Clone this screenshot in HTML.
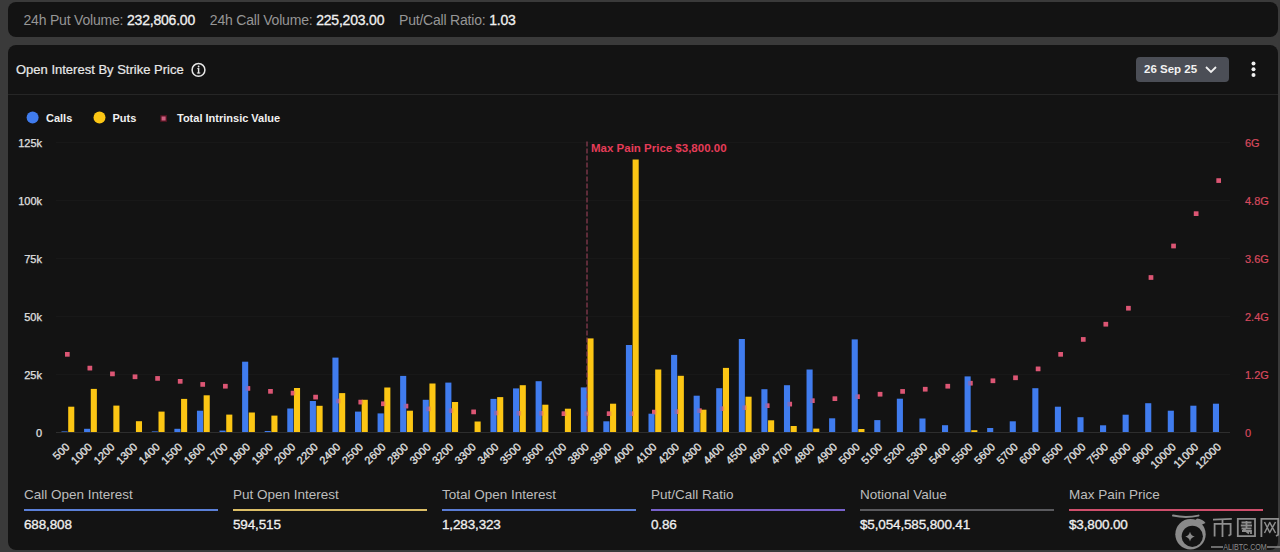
<!DOCTYPE html>
<html><head><meta charset="utf-8"><style>
*{box-sizing:border-box}
html,body{margin:0;padding:0}
body{width:1280px;height:552px;overflow:hidden;background:#3a3a3a;font-family:"Liberation Sans",sans-serif;position:relative}
.panel{position:absolute;background:#131313;border-radius:8px}
.t{position:absolute;white-space:nowrap;line-height:1}
.ax{font-size:11px;fill:#e0e0e0;stroke:#e0e0e0;stroke-width:0.25px}
.axr{font-size:11px;fill:#d84a5e;stroke:#d84a5e;stroke-width:0.2px}
.xl{font-size:11px;fill:#e2e2e2;stroke:#e2e2e2;stroke-width:0.3px}
.mp{font-size:11.5px;font-weight:bold;fill:#e63c58}
.lab{color:#969696}
.val{color:#f0f0f0;-webkit-text-stroke:0.3px #f0f0f0}
.st{position:absolute;top:0;width:194px}
.st .l{position:absolute;left:0;top:487px;font-size:13.5px;color:#bdbdbd;white-space:nowrap}
.st .ln{position:absolute;left:0;top:509px;width:194px;height:2px}
.st .v{position:absolute;left:0;top:517px;font-size:13.5px;color:#f0f0f0;white-space:nowrap;letter-spacing:-0.15px;-webkit-text-stroke:0.3px #f0f0f0}
</style></head><body>
<div class="panel" style="left:8px;top:2px;width:1270px;height:35px"></div>
<div class="t" style="left:23.5px;top:13px;font-size:14px;letter-spacing:-0.2px"><span class="lab">24h Put Volume:</span> <span class="val">232,806.00</span>&nbsp;&nbsp;&nbsp; <span class="lab">24h Call Volume:</span> <span class="val">225,203.00</span>&nbsp;&nbsp;&nbsp; <span class="lab">Put/Call Ratio:</span> <span class="val">1.03</span></div>
<div class="panel" style="left:8px;top:45px;width:1270px;height:505px"></div>
<div style="position:absolute;left:8px;top:94px;width:1270px;height:1px;background:#262626"></div>
<div class="t" style="left:16px;top:63px;font-size:13px;color:#e8e8e8;-webkit-text-stroke:0.2px #e8e8e8">Open Interest By Strike Price</div>
<svg style="position:absolute;left:0;top:0" width="1280" height="552">
<circle cx="198.5" cy="69.9" r="6.4" fill="none" stroke="#e6e6e6" stroke-width="1.5"/>
<rect x="197.9" y="68.3" width="1.4" height="5" fill="#e6e6e6"/>
<rect x="196.9" y="72.5" width="3.4" height="1" fill="#e6e6e6"/>
<rect x="197.2" y="68.2" width="2" height="0.9" fill="#e6e6e6"/>
<circle cx="198.6" cy="66.5" r="0.9" fill="#e6e6e6"/>
<rect x="1136" y="57" width="93" height="25" rx="4" fill="#4b4e56"/>
<polyline points="1206,67 1211,72 1216,67" fill="none" stroke="#f0f0f0" stroke-width="1.8"/>
<circle cx="1253.5" cy="63.5" r="2" fill="#f0f0f0"/>
<circle cx="1253.5" cy="69.3" r="2" fill="#f0f0f0"/>
<circle cx="1253.5" cy="75.1" r="2" fill="#f0f0f0"/>
<circle cx="32.6" cy="117.6" r="6" fill="#407cee"/>
<circle cx="99.5" cy="117.6" r="6" fill="#fcc614"/>
<rect x="160.3" y="115.2" width="6.6" height="6.6" fill="#5a1624"/><rect x="161.6" y="116.5" width="4" height="4" fill="#cc5f80"/>
<line x1="56.0" y1="432.5" x2="1230.0" y2="432.5" stroke="#2e2e2e" stroke-width="1"/>
<line x1="56.0" y1="374.5" x2="1230.0" y2="374.5" stroke="#181818" stroke-width="1"/>
<line x1="56.0" y1="316.5" x2="1230.0" y2="316.5" stroke="#181818" stroke-width="1"/>
<line x1="56.0" y1="258.5" x2="1230.0" y2="258.5" stroke="#181818" stroke-width="1"/>
<line x1="56.0" y1="200.5" x2="1230.0" y2="200.5" stroke="#181818" stroke-width="1"/>
<line x1="56.0" y1="142.5" x2="1230.0" y2="142.5" stroke="#181818" stroke-width="1"/>
<text x="42" y="436.8" text-anchor="end" class="ax">0</text>
<text x="42" y="378.8" text-anchor="end" class="ax">25k</text>
<text x="42" y="320.8" text-anchor="end" class="ax">50k</text>
<text x="42" y="262.8" text-anchor="end" class="ax">75k</text>
<text x="42" y="204.8" text-anchor="end" class="ax">100k</text>
<text x="42" y="146.8" text-anchor="end" class="ax">125k</text>
<text x="1245" y="437.0" class="axr">0</text>
<text x="1245" y="379.0" class="axr">1.2G</text>
<text x="1245" y="321.0" class="axr">2.4G</text>
<text x="1245" y="263.0" class="axr">3.6G</text>
<text x="1245" y="205.0" class="axr">4.8G</text>
<text x="1245" y="147.0" class="axr">6G</text>
<text transform="translate(70.29,447.6) rotate(-45)" text-anchor="end" class="xl">500</text>
<text transform="translate(92.87,447.6) rotate(-45)" text-anchor="end" class="xl">1000</text>
<text transform="translate(115.44,447.6) rotate(-45)" text-anchor="end" class="xl">1200</text>
<text transform="translate(138.02,447.6) rotate(-45)" text-anchor="end" class="xl">1300</text>
<text transform="translate(160.60,447.6) rotate(-45)" text-anchor="end" class="xl">1400</text>
<text transform="translate(183.17,447.6) rotate(-45)" text-anchor="end" class="xl">1500</text>
<text transform="translate(205.75,447.6) rotate(-45)" text-anchor="end" class="xl">1600</text>
<text transform="translate(228.33,447.6) rotate(-45)" text-anchor="end" class="xl">1700</text>
<text transform="translate(250.90,447.6) rotate(-45)" text-anchor="end" class="xl">1800</text>
<text transform="translate(273.48,447.6) rotate(-45)" text-anchor="end" class="xl">1900</text>
<text transform="translate(296.06,447.6) rotate(-45)" text-anchor="end" class="xl">2000</text>
<text transform="translate(318.63,447.6) rotate(-45)" text-anchor="end" class="xl">2200</text>
<text transform="translate(341.21,447.6) rotate(-45)" text-anchor="end" class="xl">2400</text>
<text transform="translate(363.79,447.6) rotate(-45)" text-anchor="end" class="xl">2500</text>
<text transform="translate(386.37,447.6) rotate(-45)" text-anchor="end" class="xl">2600</text>
<text transform="translate(408.94,447.6) rotate(-45)" text-anchor="end" class="xl">2800</text>
<text transform="translate(431.52,447.6) rotate(-45)" text-anchor="end" class="xl">3000</text>
<text transform="translate(454.10,447.6) rotate(-45)" text-anchor="end" class="xl">3200</text>
<text transform="translate(476.67,447.6) rotate(-45)" text-anchor="end" class="xl">3300</text>
<text transform="translate(499.25,447.6) rotate(-45)" text-anchor="end" class="xl">3400</text>
<text transform="translate(521.83,447.6) rotate(-45)" text-anchor="end" class="xl">3500</text>
<text transform="translate(544.40,447.6) rotate(-45)" text-anchor="end" class="xl">3600</text>
<text transform="translate(566.98,447.6) rotate(-45)" text-anchor="end" class="xl">3700</text>
<text transform="translate(589.56,447.6) rotate(-45)" text-anchor="end" class="xl">3800</text>
<text transform="translate(612.13,447.6) rotate(-45)" text-anchor="end" class="xl">3900</text>
<text transform="translate(634.71,447.6) rotate(-45)" text-anchor="end" class="xl">4000</text>
<text transform="translate(657.29,447.6) rotate(-45)" text-anchor="end" class="xl">4100</text>
<text transform="translate(679.87,447.6) rotate(-45)" text-anchor="end" class="xl">4200</text>
<text transform="translate(702.44,447.6) rotate(-45)" text-anchor="end" class="xl">4300</text>
<text transform="translate(725.02,447.6) rotate(-45)" text-anchor="end" class="xl">4400</text>
<text transform="translate(747.60,447.6) rotate(-45)" text-anchor="end" class="xl">4500</text>
<text transform="translate(770.17,447.6) rotate(-45)" text-anchor="end" class="xl">4600</text>
<text transform="translate(792.75,447.6) rotate(-45)" text-anchor="end" class="xl">4700</text>
<text transform="translate(815.33,447.6) rotate(-45)" text-anchor="end" class="xl">4800</text>
<text transform="translate(837.90,447.6) rotate(-45)" text-anchor="end" class="xl">4900</text>
<text transform="translate(860.48,447.6) rotate(-45)" text-anchor="end" class="xl">5000</text>
<text transform="translate(883.06,447.6) rotate(-45)" text-anchor="end" class="xl">5100</text>
<text transform="translate(905.63,447.6) rotate(-45)" text-anchor="end" class="xl">5200</text>
<text transform="translate(928.21,447.6) rotate(-45)" text-anchor="end" class="xl">5300</text>
<text transform="translate(950.79,447.6) rotate(-45)" text-anchor="end" class="xl">5400</text>
<text transform="translate(973.37,447.6) rotate(-45)" text-anchor="end" class="xl">5500</text>
<text transform="translate(995.94,447.6) rotate(-45)" text-anchor="end" class="xl">5600</text>
<text transform="translate(1018.52,447.6) rotate(-45)" text-anchor="end" class="xl">5700</text>
<text transform="translate(1041.10,447.6) rotate(-45)" text-anchor="end" class="xl">6000</text>
<text transform="translate(1063.67,447.6) rotate(-45)" text-anchor="end" class="xl">6500</text>
<text transform="translate(1086.25,447.6) rotate(-45)" text-anchor="end" class="xl">7000</text>
<text transform="translate(1108.83,447.6) rotate(-45)" text-anchor="end" class="xl">7500</text>
<text transform="translate(1131.40,447.6) rotate(-45)" text-anchor="end" class="xl">8000</text>
<text transform="translate(1153.98,447.6) rotate(-45)" text-anchor="end" class="xl">9000</text>
<text transform="translate(1176.56,447.6) rotate(-45)" text-anchor="end" class="xl">10000</text>
<text transform="translate(1199.13,447.6) rotate(-45)" text-anchor="end" class="xl">11000</text>
<text transform="translate(1221.71,447.6) rotate(-45)" text-anchor="end" class="xl">12000</text>
<rect x="64.99" y="352.00" width="4.6" height="4.6" fill="#dc5674"/>
<rect x="87.57" y="365.80" width="4.6" height="4.6" fill="#dc5674"/>
<rect x="110.14" y="371.60" width="4.6" height="4.6" fill="#dc5674"/>
<rect x="132.72" y="374.50" width="4.6" height="4.6" fill="#dc5674"/>
<rect x="155.30" y="376.10" width="4.6" height="4.6" fill="#dc5674"/>
<rect x="177.87" y="379.00" width="4.6" height="4.6" fill="#dc5674"/>
<rect x="200.45" y="382.10" width="4.6" height="4.6" fill="#dc5674"/>
<rect x="223.03" y="383.90" width="4.6" height="4.6" fill="#dc5674"/>
<rect x="245.60" y="386.10" width="4.6" height="4.6" fill="#dc5674"/>
<rect x="268.18" y="389.00" width="4.6" height="4.6" fill="#dc5674"/>
<rect x="290.76" y="390.80" width="4.6" height="4.6" fill="#dc5674"/>
<rect x="313.33" y="394.80" width="4.6" height="4.6" fill="#dc5674"/>
<rect x="335.91" y="398.70" width="4.6" height="4.6" fill="#dc5674"/>
<rect x="358.49" y="399.80" width="4.6" height="4.6" fill="#dc5674"/>
<rect x="381.07" y="401.50" width="4.6" height="4.6" fill="#dc5674"/>
<rect x="403.64" y="403.80" width="4.6" height="4.6" fill="#dc5674"/>
<rect x="426.22" y="406.60" width="4.6" height="4.6" fill="#dc5674"/>
<rect x="448.80" y="408.40" width="4.6" height="4.6" fill="#dc5674"/>
<rect x="471.37" y="409.60" width="4.6" height="4.6" fill="#dc5674"/>
<rect x="493.95" y="410.70" width="4.6" height="4.6" fill="#dc5674"/>
<rect x="516.53" y="411.00" width="4.6" height="4.6" fill="#dc5674"/>
<rect x="539.10" y="411.00" width="4.6" height="4.6" fill="#dc5674"/>
<rect x="561.68" y="411.40" width="4.6" height="4.6" fill="#dc5674"/>
<rect x="584.26" y="411.40" width="4.6" height="4.6" fill="#dc5674"/>
<rect x="606.83" y="411.40" width="4.6" height="4.6" fill="#dc5674"/>
<rect x="629.41" y="411.40" width="4.6" height="4.6" fill="#dc5674"/>
<rect x="651.99" y="409.80" width="4.6" height="4.6" fill="#dc5674"/>
<rect x="674.57" y="409.40" width="4.6" height="4.6" fill="#dc5674"/>
<rect x="697.14" y="408.40" width="4.6" height="4.6" fill="#dc5674"/>
<rect x="719.72" y="406.40" width="4.6" height="4.6" fill="#dc5674"/>
<rect x="742.30" y="405.40" width="4.6" height="4.6" fill="#dc5674"/>
<rect x="764.87" y="403.40" width="4.6" height="4.6" fill="#dc5674"/>
<rect x="787.45" y="401.80" width="4.6" height="4.6" fill="#dc5674"/>
<rect x="810.03" y="398.40" width="4.6" height="4.6" fill="#dc5674"/>
<rect x="832.60" y="396.40" width="4.6" height="4.6" fill="#dc5674"/>
<rect x="855.18" y="394.40" width="4.6" height="4.6" fill="#dc5674"/>
<rect x="877.76" y="391.90" width="4.6" height="4.6" fill="#dc5674"/>
<rect x="900.33" y="389.10" width="4.6" height="4.6" fill="#dc5674"/>
<rect x="922.91" y="386.90" width="4.6" height="4.6" fill="#dc5674"/>
<rect x="945.49" y="383.90" width="4.6" height="4.6" fill="#dc5674"/>
<rect x="968.07" y="380.90" width="4.6" height="4.6" fill="#dc5674"/>
<rect x="990.64" y="378.50" width="4.6" height="4.6" fill="#dc5674"/>
<rect x="1013.22" y="375.50" width="4.6" height="4.6" fill="#dc5674"/>
<rect x="1035.80" y="366.60" width="4.6" height="4.6" fill="#dc5674"/>
<rect x="1058.37" y="352.00" width="4.6" height="4.6" fill="#dc5674"/>
<rect x="1080.95" y="337.10" width="4.6" height="4.6" fill="#dc5674"/>
<rect x="1103.53" y="321.90" width="4.6" height="4.6" fill="#dc5674"/>
<rect x="1126.10" y="305.90" width="4.6" height="4.6" fill="#dc5674"/>
<rect x="1148.68" y="275.20" width="4.6" height="4.6" fill="#dc5674"/>
<rect x="1171.26" y="243.70" width="4.6" height="4.6" fill="#dc5674"/>
<rect x="1193.83" y="211.40" width="4.6" height="4.6" fill="#dc5674"/>
<rect x="1216.41" y="178.30" width="4.6" height="4.6" fill="#dc5674"/>
<rect x="61.49" y="431.40" width="6.1" height="0.60" fill="#407cee"/>
<rect x="68.19" y="406.70" width="6.1" height="25.30" fill="#fcc614"/>
<rect x="84.07" y="428.80" width="6.1" height="3.20" fill="#407cee"/>
<rect x="90.77" y="388.90" width="6.1" height="43.10" fill="#fcc614"/>
<rect x="113.34" y="405.60" width="6.1" height="26.40" fill="#fcc614"/>
<rect x="135.92" y="421.20" width="6.1" height="10.80" fill="#fcc614"/>
<rect x="151.80" y="431.40" width="6.1" height="0.60" fill="#407cee"/>
<rect x="158.50" y="411.60" width="6.1" height="20.40" fill="#fcc614"/>
<rect x="174.37" y="428.80" width="6.1" height="3.20" fill="#407cee"/>
<rect x="181.07" y="398.90" width="6.1" height="33.10" fill="#fcc614"/>
<rect x="196.95" y="410.70" width="6.1" height="21.30" fill="#407cee"/>
<rect x="203.65" y="395.30" width="6.1" height="36.70" fill="#fcc614"/>
<rect x="219.53" y="430.60" width="6.1" height="1.40" fill="#407cee"/>
<rect x="226.23" y="414.60" width="6.1" height="17.40" fill="#fcc614"/>
<rect x="242.10" y="361.70" width="6.1" height="70.30" fill="#407cee"/>
<rect x="248.80" y="412.50" width="6.1" height="19.50" fill="#fcc614"/>
<rect x="264.68" y="431.00" width="6.1" height="1.00" fill="#407cee"/>
<rect x="271.38" y="415.60" width="6.1" height="16.40" fill="#fcc614"/>
<rect x="287.26" y="408.50" width="6.1" height="23.50" fill="#407cee"/>
<rect x="293.96" y="388.00" width="6.1" height="44.00" fill="#fcc614"/>
<rect x="309.83" y="401.00" width="6.1" height="31.00" fill="#407cee"/>
<rect x="316.53" y="405.80" width="6.1" height="26.20" fill="#fcc614"/>
<rect x="332.41" y="357.60" width="6.1" height="74.40" fill="#407cee"/>
<rect x="339.11" y="393.10" width="6.1" height="38.90" fill="#fcc614"/>
<rect x="354.99" y="411.60" width="6.1" height="20.40" fill="#407cee"/>
<rect x="361.69" y="399.80" width="6.1" height="32.20" fill="#fcc614"/>
<rect x="377.57" y="413.40" width="6.1" height="18.60" fill="#407cee"/>
<rect x="384.27" y="387.50" width="6.1" height="44.50" fill="#fcc614"/>
<rect x="400.14" y="375.90" width="6.1" height="56.10" fill="#407cee"/>
<rect x="406.84" y="410.70" width="6.1" height="21.30" fill="#fcc614"/>
<rect x="422.72" y="399.80" width="6.1" height="32.20" fill="#407cee"/>
<rect x="429.42" y="383.50" width="6.1" height="48.50" fill="#fcc614"/>
<rect x="445.30" y="382.60" width="6.1" height="49.40" fill="#407cee"/>
<rect x="452.00" y="402.00" width="6.1" height="30.00" fill="#fcc614"/>
<rect x="474.57" y="421.50" width="6.1" height="10.50" fill="#fcc614"/>
<rect x="490.45" y="398.90" width="6.1" height="33.10" fill="#407cee"/>
<rect x="497.15" y="397.10" width="6.1" height="34.90" fill="#fcc614"/>
<rect x="513.03" y="388.40" width="6.1" height="43.60" fill="#407cee"/>
<rect x="519.73" y="385.20" width="6.1" height="46.80" fill="#fcc614"/>
<rect x="535.60" y="381.20" width="6.1" height="50.80" fill="#407cee"/>
<rect x="542.30" y="404.70" width="6.1" height="27.30" fill="#fcc614"/>
<rect x="564.88" y="408.70" width="6.1" height="23.30" fill="#fcc614"/>
<rect x="580.76" y="387.40" width="6.1" height="44.60" fill="#407cee"/>
<rect x="587.46" y="338.40" width="6.1" height="93.60" fill="#fcc614"/>
<rect x="603.33" y="421.30" width="6.1" height="10.70" fill="#407cee"/>
<rect x="610.03" y="403.70" width="6.1" height="28.30" fill="#fcc614"/>
<rect x="625.91" y="345.00" width="6.1" height="87.00" fill="#407cee"/>
<rect x="632.61" y="159.50" width="6.1" height="272.50" fill="#fcc614"/>
<rect x="648.49" y="413.70" width="6.1" height="18.30" fill="#407cee"/>
<rect x="655.19" y="369.50" width="6.1" height="62.50" fill="#fcc614"/>
<rect x="671.07" y="354.90" width="6.1" height="77.10" fill="#407cee"/>
<rect x="677.77" y="375.80" width="6.1" height="56.20" fill="#fcc614"/>
<rect x="693.64" y="395.70" width="6.1" height="36.30" fill="#407cee"/>
<rect x="700.34" y="409.70" width="6.1" height="22.30" fill="#fcc614"/>
<rect x="716.22" y="388.20" width="6.1" height="43.80" fill="#407cee"/>
<rect x="722.92" y="367.90" width="6.1" height="64.10" fill="#fcc614"/>
<rect x="738.80" y="339.00" width="6.1" height="93.00" fill="#407cee"/>
<rect x="745.50" y="396.70" width="6.1" height="35.30" fill="#fcc614"/>
<rect x="761.37" y="389.20" width="6.1" height="42.80" fill="#407cee"/>
<rect x="768.07" y="420.30" width="6.1" height="11.70" fill="#fcc614"/>
<rect x="783.95" y="385.20" width="6.1" height="46.80" fill="#407cee"/>
<rect x="790.65" y="426.00" width="6.1" height="6.00" fill="#fcc614"/>
<rect x="806.53" y="369.50" width="6.1" height="62.50" fill="#407cee"/>
<rect x="813.23" y="428.60" width="6.1" height="3.40" fill="#fcc614"/>
<rect x="829.10" y="418.30" width="6.1" height="13.70" fill="#407cee"/>
<rect x="851.68" y="339.40" width="6.1" height="92.60" fill="#407cee"/>
<rect x="858.38" y="429.00" width="6.1" height="3.00" fill="#fcc614"/>
<rect x="874.26" y="420.10" width="6.1" height="11.90" fill="#407cee"/>
<rect x="896.83" y="398.70" width="6.1" height="33.30" fill="#407cee"/>
<rect x="919.41" y="418.50" width="6.1" height="13.50" fill="#407cee"/>
<rect x="941.99" y="425.20" width="6.1" height="6.80" fill="#407cee"/>
<rect x="964.57" y="376.40" width="6.1" height="55.60" fill="#407cee"/>
<rect x="971.27" y="430.20" width="6.1" height="1.80" fill="#fcc614"/>
<rect x="987.14" y="428.00" width="6.1" height="4.00" fill="#407cee"/>
<rect x="1009.72" y="421.30" width="6.1" height="10.70" fill="#407cee"/>
<rect x="1032.30" y="388.20" width="6.1" height="43.80" fill="#407cee"/>
<rect x="1054.87" y="406.70" width="6.1" height="25.30" fill="#407cee"/>
<rect x="1077.45" y="417.20" width="6.1" height="14.80" fill="#407cee"/>
<rect x="1100.03" y="425.30" width="6.1" height="6.70" fill="#407cee"/>
<rect x="1122.60" y="414.70" width="6.1" height="17.30" fill="#407cee"/>
<rect x="1145.18" y="403.20" width="6.1" height="28.80" fill="#407cee"/>
<rect x="1167.76" y="410.70" width="6.1" height="21.30" fill="#407cee"/>
<rect x="1190.33" y="405.70" width="6.1" height="26.30" fill="#407cee"/>
<rect x="1212.91" y="403.70" width="6.1" height="28.30" fill="#407cee"/>
<g opacity="0.35"><rect x="64.99" y="352.00" width="4.6" height="4.6" fill="#dc5674"/><rect x="87.57" y="365.80" width="4.6" height="4.6" fill="#dc5674"/><rect x="110.14" y="371.60" width="4.6" height="4.6" fill="#dc5674"/><rect x="132.72" y="374.50" width="4.6" height="4.6" fill="#dc5674"/><rect x="155.30" y="376.10" width="4.6" height="4.6" fill="#dc5674"/><rect x="177.87" y="379.00" width="4.6" height="4.6" fill="#dc5674"/><rect x="200.45" y="382.10" width="4.6" height="4.6" fill="#dc5674"/><rect x="223.03" y="383.90" width="4.6" height="4.6" fill="#dc5674"/><rect x="245.60" y="386.10" width="4.6" height="4.6" fill="#dc5674"/><rect x="268.18" y="389.00" width="4.6" height="4.6" fill="#dc5674"/><rect x="290.76" y="390.80" width="4.6" height="4.6" fill="#dc5674"/><rect x="313.33" y="394.80" width="4.6" height="4.6" fill="#dc5674"/><rect x="335.91" y="398.70" width="4.6" height="4.6" fill="#dc5674"/><rect x="358.49" y="399.80" width="4.6" height="4.6" fill="#dc5674"/><rect x="381.07" y="401.50" width="4.6" height="4.6" fill="#dc5674"/><rect x="403.64" y="403.80" width="4.6" height="4.6" fill="#dc5674"/><rect x="426.22" y="406.60" width="4.6" height="4.6" fill="#dc5674"/><rect x="448.80" y="408.40" width="4.6" height="4.6" fill="#dc5674"/><rect x="471.37" y="409.60" width="4.6" height="4.6" fill="#dc5674"/><rect x="493.95" y="410.70" width="4.6" height="4.6" fill="#dc5674"/><rect x="516.53" y="411.00" width="4.6" height="4.6" fill="#dc5674"/><rect x="539.10" y="411.00" width="4.6" height="4.6" fill="#dc5674"/><rect x="561.68" y="411.40" width="4.6" height="4.6" fill="#dc5674"/><rect x="584.26" y="411.40" width="4.6" height="4.6" fill="#dc5674"/><rect x="606.83" y="411.40" width="4.6" height="4.6" fill="#dc5674"/><rect x="629.41" y="411.40" width="4.6" height="4.6" fill="#dc5674"/><rect x="651.99" y="409.80" width="4.6" height="4.6" fill="#dc5674"/><rect x="674.57" y="409.40" width="4.6" height="4.6" fill="#dc5674"/><rect x="697.14" y="408.40" width="4.6" height="4.6" fill="#dc5674"/><rect x="719.72" y="406.40" width="4.6" height="4.6" fill="#dc5674"/><rect x="742.30" y="405.40" width="4.6" height="4.6" fill="#dc5674"/><rect x="764.87" y="403.40" width="4.6" height="4.6" fill="#dc5674"/><rect x="787.45" y="401.80" width="4.6" height="4.6" fill="#dc5674"/><rect x="810.03" y="398.40" width="4.6" height="4.6" fill="#dc5674"/><rect x="832.60" y="396.40" width="4.6" height="4.6" fill="#dc5674"/><rect x="855.18" y="394.40" width="4.6" height="4.6" fill="#dc5674"/><rect x="877.76" y="391.90" width="4.6" height="4.6" fill="#dc5674"/><rect x="900.33" y="389.10" width="4.6" height="4.6" fill="#dc5674"/><rect x="922.91" y="386.90" width="4.6" height="4.6" fill="#dc5674"/><rect x="945.49" y="383.90" width="4.6" height="4.6" fill="#dc5674"/><rect x="968.07" y="380.90" width="4.6" height="4.6" fill="#dc5674"/><rect x="990.64" y="378.50" width="4.6" height="4.6" fill="#dc5674"/><rect x="1013.22" y="375.50" width="4.6" height="4.6" fill="#dc5674"/><rect x="1035.80" y="366.60" width="4.6" height="4.6" fill="#dc5674"/><rect x="1058.37" y="352.00" width="4.6" height="4.6" fill="#dc5674"/><rect x="1080.95" y="337.10" width="4.6" height="4.6" fill="#dc5674"/><rect x="1103.53" y="321.90" width="4.6" height="4.6" fill="#dc5674"/><rect x="1126.10" y="305.90" width="4.6" height="4.6" fill="#dc5674"/><rect x="1148.68" y="275.20" width="4.6" height="4.6" fill="#dc5674"/><rect x="1171.26" y="243.70" width="4.6" height="4.6" fill="#dc5674"/><rect x="1193.83" y="211.40" width="4.6" height="4.6" fill="#dc5674"/><rect x="1216.41" y="178.30" width="4.6" height="4.6" fill="#dc5674"/></g>
<line x1="587.00" y1="141.5" x2="587.00" y2="432.0" stroke="#a84660" stroke-width="1" stroke-dasharray="5,2"/>
<text x="591" y="152" class="mp">Max Pain Price $3,800.00</text>

<g fill="none" stroke="#8a8a8a" stroke-linecap="round">
<path d="M1173,515.6 Q1186,518.5 1198.5,515.6" stroke-width="2"/>
</g>
<circle cx="1190.5" cy="534.3" r="15.2" fill="#8a8a8a"/>
<circle cx="1192.3" cy="536.3" r="10.6" fill="#131313"/>
<path d="M1197,518.5 Q1203,519 1205.5,523 L1201,525 Q1199,521.5 1195,520.5 Z" fill="#8a8a8a"/>
<path d="M1190,531.8 Q1190.9,535.7 1194.8,536.6 Q1190.9,537.5 1190,541.4 Q1189.1,537.5 1185.2,536.6 Q1189.1,535.7 1190,531.8 Z" fill="#8a8a8a"/>
<g fill="none" stroke="#8e8e8e" stroke-width="1.8">
<path d="M1213,519.6 L1231.8,518.8"/>
<path d="M1214.6,536.5 V523.8 H1230.6 V534.5 L1228.5,535.8"/>
<path d="M1222.5,519.5 V537"/>
<path d="M1237.8,518.8 H1255 V536.2 H1237.8 Z"/>
<path d="M1241.5,522.5 H1251.5 M1240.8,525.5 H1252 M1241.5,528.5 H1251.5 M1246.5,521 V529 M1242,531 H1251 V534 M1243.5,529 L1249,533.5"/>
<path d="M1261.4,537 V518.8 H1278.2 V534.8 L1276,536"/>
<path d="M1264.5,522 L1270,533 M1270,522 L1264.5,533 M1269.5,522 L1275.5,533 M1275.5,522 L1269.5,533" stroke-width="1.5"/>
</g>
<path d="M1211,547 H1223 M1267,547 H1280" stroke="#8a8a8a" stroke-width="1.3"/>
<text x="1223.3" y="549.8" font-size="9" fill="#8e8e8e" textLength="43.5" lengthAdjust="spacingAndGlyphs">ALIBTC.COM</text>
</svg>
<div class="t" style="left:1144px;top:64px;font-size:11.5px;font-weight:bold;color:#f2f2f2">26 Sep 25</div>
<div class="t" style="left:46px;top:113px;font-size:11px;font-weight:bold;color:#f0f0f0">Calls</div>
<div class="t" style="left:112.5px;top:113px;font-size:11px;font-weight:bold;color:#f0f0f0">Puts</div>
<div class="t" style="left:177px;top:113px;font-size:11px;font-weight:bold;color:#f0f0f0">Total Intrinsic Value</div>
<div class="st" style="left:24px"><div class="l">Call Open Interest</div><div class="ln" style="background:#5b80d8"></div><div class="v">688,808</div></div>
<div class="st" style="left:233px"><div class="l">Put Open Interest</div><div class="ln" style="background:#dcbe66"></div><div class="v">594,515</div></div>
<div class="st" style="left:442px"><div class="l">Total Open Interest</div><div class="ln" style="background:#5a7cd4"></div><div class="v">1,283,323</div></div>
<div class="st" style="left:651px"><div class="l">Put/Call Ratio</div><div class="ln" style="background:#7862cc"></div><div class="v">0.86</div></div>
<div class="st" style="left:860px"><div class="l">Notional Value</div><div class="ln" style="background:#5a5a5e"></div><div class="v">$5,054,585,800.41</div></div>
<div class="st" style="left:1069px"><div class="l">Max Pain Price</div><div class="ln" style="background:#d04f6c"></div><div class="v">$3,800.00</div></div>
</body></html>
